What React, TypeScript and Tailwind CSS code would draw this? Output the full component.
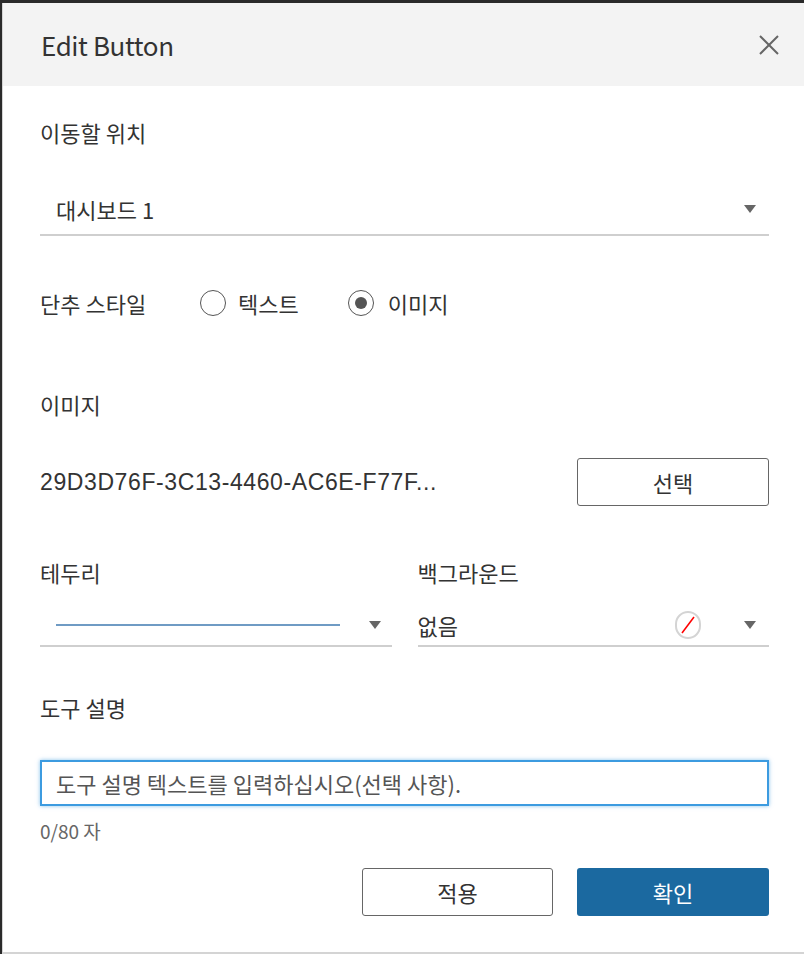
import React from 'react';

const font = { fontFamily: '"Noto Sans CJK KR", "Noto Sans", sans-serif' };

const Caret = () => (
  <svg width="14" height="10" viewBox="0 0 14 10" className="shrink-0">
    <path d="M1 1 L13 1 L7 9 Z" fill="#666" />
  </svg>
);

const Radio = ({ checked }: { checked?: boolean }) => (
  <span className="w-[26px] h-[26px] rounded-full border-[1.5px] border-[#555] flex items-center justify-center bg-white">
    {checked && <span className="w-[12px] h-[12px] rounded-full bg-[#555]" />}
  </span>
);

export default function App() {
  return (
    <div className="w-[804px] h-[954px] bg-[#2a2a2a] pt-[3px] pl-[2px]" style={font}>
      <div className="h-full bg-white border-l border-b-[2px] border-[#d4d4d4] flex flex-col text-[#333]">
        <div className="h-[83px] bg-[#f3f3f3] flex items-center justify-between pl-[38px] pr-[24px]">
          <h1 className="text-[26px] tracking-[-0.4px] text-[#333]">Edit Button</h1>
          <svg width="22" height="22" viewBox="0 0 22 22">
            <path d="M2 2 L20 20 M20 2 L2 20" stroke="#666" strokeWidth="2" />
          </svg>
        </div>

        <div className="flex flex-col pl-[37px] pr-[35px] text-[22px]">
          <div className="mt-[31px] leading-[30px]">이동할 위치</div>

          <div className="mt-[47px] flex items-center justify-between border-b-2 border-[#cfcfcf] pb-[10px] pl-[16px] pr-[12px]">
            <span className="leading-[30px]">대시보드 1</span>
            <Caret />
          </div>

          <div className="mt-[52px] flex items-center">
            <span className="leading-[30px] w-[160px]">단추 스타일</span>
            <label className="flex items-center gap-[12px]">
              <Radio />
              <span className="leading-[30px]">텍스트</span>
            </label>
            <label className="flex items-center gap-[14px] ml-[49px]">
              <Radio checked />
              <span className="leading-[30px]">이미지</span>
            </label>
          </div>

          <div className="leading-[30px] mt-[71px]">이미지</div>

          <div className="mt-[39px] flex items-center justify-between">
            <span
              className="text-[23px] leading-[30px] tracking-[0.6px]"
              style={{ fontFamily: '"Liberation Sans", "Noto Sans", sans-serif' }}
            >
              29D3D76F-3C13-4460-AC6E-F77F...
            </span>
            <button className="w-[192px] h-[48px] border border-[#666] rounded-[3px] text-[22px] text-[#333] bg-white">선택</button>
          </div>

          <div className="mt-[51px] grid grid-cols-2 gap-[26px]">
            <div className="flex flex-col">
              <span className="leading-[30px]">테두리</span>
              <div className="mt-[18px] h-[42px] flex items-center border-b-2 border-[#cfcfcf] pl-[16px] pr-[10px]">
                <span className="w-[284px] h-[2px] bg-[#6f9bc4]" />
                <span className="ml-auto"><Caret /></span>
              </div>
            </div>
            <div className="flex flex-col">
              <span className="leading-[30px]">백그라운드</span>
              <div className="mt-[18px] h-[42px] flex items-center border-b-2 border-[#cfcfcf] pr-[12px]">
                <span className="leading-[30px]">없음</span>
                <span className="ml-auto w-[26px] h-[28px] rounded-full border-2 border-[#d4d4d4] flex items-center justify-center">
                  <svg width="16" height="20" viewBox="0 0 16 20">
                    <path d="M14 2 L2 18" stroke="#ff0000" strokeWidth="1.6" />
                  </svg>
                </span>
                <span className="ml-[42px]"><Caret /></span>
              </div>
            </div>
          </div>

          <div className="leading-[30px] mt-[45px]">도구 설명</div>

          <div className="mt-[38px] h-[46px] border-2 border-[#3c9be0] shadow-[0_0_4px_rgba(60,155,224,0.6)] flex items-center pl-[14px]">
            <span className="leading-[30px] text-[#555]">도구 설명 텍스트를 입력하십시오(선택 사항).</span>
          </div>

          <div className="mt-[13px] text-[19px] leading-[24px] text-[#666]">0/80 자</div>

          <div className="mt-[25px] flex justify-end gap-[24px]">
            <button className="w-[191px] h-[48px] border border-[#666] rounded-[3px] text-[22px] text-[#333] bg-white">적용</button>
            <button className="w-[192px] h-[48px] rounded-[3px] text-[22px] text-white bg-[#1b69a0]">확인</button>
          </div>
        </div>
      </div>
    </div>
  );
}
